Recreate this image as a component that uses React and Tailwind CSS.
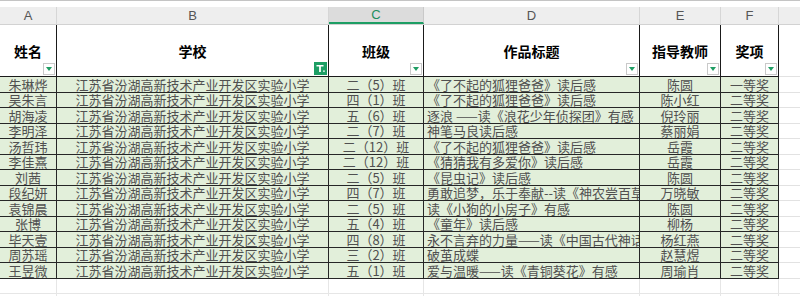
import React from "react";

const rows = [
  ["朱琳烨", "二（5）班", "《了不起的狐狸爸爸》读后感", "陈圆", "一等奖"],
  ["吴朱言", "四（1）班", "《了不起的狐狸爸爸》读后感", "陈小红", "二等奖"],
  ["胡海凌", "五（6）班", "逐浪 ——读《浪花少年侦探团》有感", "倪玲丽", "二等奖"],
  ["李明泽", "二（7）班", "神笔马良读后感", "蔡丽娟", "二等奖"],
  ["汤哲玮", "二（12）班", "《了不起的狐狸爸爸》读后感", "岳霞", "二等奖"],
  ["李佳熹", "二（12）班", "《猜猜我有多爱你》读后感", "岳霞", "二等奖"],
  ["刘茜", "二（5）班", "《昆虫记》读后感", "陈圆", "二等奖"],
  ["段纪妍", "四（7）班", "勇敢追梦，乐于奉献--读《神农尝百草》有感", "万晓敏", "二等奖"],
  ["袁锦晨", "二（5）班", "读《小狗的小房子》有感", "陈圆", "二等奖"],
  ["张博", "五（4）班", "《童年》读后感", "柳杨", "二等奖"],
  ["毕天壹", "四（8）班", "永不言弃的力量——读《中国古代神话》有感", "杨红燕", "二等奖"],
  ["周苏瑶", "三（2）班", "破茧成蝶", "赵慧煜", "二等奖"],
  ["王昱微", "五（1）班", "爱与温暖——读《青铜葵花》有感", "周瑜肖", "二等奖"],
];

const school = "江苏省汾湖高新技术产业开发区实验小学";

function FilterBtn() {
  return (
    <div className="absolute right-[1px] bottom-[1px] w-[12px] h-[12px] bg-white border border-[#c9c9c9] flex items-center justify-center">
      <svg width="6" height="4" viewBox="0 0 6 4">
        <path d="M0 0 L6 0 L3 4 Z" fill="#1f9d63" />
      </svg>
    </div>
  );
}

function FilterActive() {
  return (
    <div className="absolute right-[1px] bottom-[1px] w-[13px] h-[13px] bg-[#1d9e64] flex items-center justify-center">
      <svg width="11" height="11" viewBox="0 0 11 11">
        <path d="M1.5 2 H8.5 V3.6 H5.9 V9 H4.1 V3.6 H1.5 Z" fill="#ffffff" />
        <rect x="8.2" y="7.4" width="1.5" height="1.5" fill="#ffffff" />
      </svg>
    </div>
  );
}

const letterCell = "h-full flex items-center justify-center border-r border-[#d6d6d6] text-[13px] text-[#555]";
const dataCell = "h-full flex items-center bg-[#e2efda] border-r border-b border-[#262626] whitespace-nowrap overflow-hidden";
const blankCell = "h-full border-r border-b border-[#e6e6e6]";

export default function App() {
  return (
    <div
      className="w-[800px] h-[296px] overflow-hidden bg-white"
      style={{ fontFamily: '"Noto Sans CJK SC", "Noto Sans", sans-serif' }}
    >
      {/* top strip */}
      <div className="h-[7px] border-t border-[#c4c4c4] bg-white" />

      {/* column letters */}
      <div
        className="flex h-[18px] bg-[#eeeeee] border-b border-[#d2d2d2] leading-[14px]"
        style={{ fontFamily: '"Liberation Sans", Arial, sans-serif' }}
      >
        <div className={"w-[57px] " + letterCell}>A</div>
        <div className={"w-[272px] " + letterCell}>B</div>
        <div className="w-[95px] h-full flex items-center justify-center border-r border-[#c9c9c9] bg-[#dcdcdc] text-[13px] text-[#1d8f5e] border-b-2 border-b-[#1d9e64]">C</div>
        <div className={"w-[216px] " + letterCell}>D</div>
        <div className={"w-[81px] " + letterCell}>E</div>
        <div className={"w-[58px] " + letterCell}>F</div>
        <div className="flex-1 h-full" />
      </div>

      {/* header row */}
      <div className="flex h-[52px] text-[14px] leading-[16px] font-bold text-black">
        <div className="relative w-[57px] h-full flex items-center justify-center border-r border-b border-[#1a1a1a]">
          <span>姓名</span>
          <FilterBtn />
        </div>
        <div className="relative w-[272px] h-full flex items-center justify-center border-r border-b border-[#1a1a1a]">
          <span>学校</span>
          <FilterActive />
        </div>
        <div className="relative w-[95px] h-full flex items-center justify-center border-r border-b border-[#1a1a1a]">
          <span>班级</span>
          <FilterBtn />
        </div>
        <div className="relative w-[216px] h-full flex items-center justify-center border-r border-b border-[#1a1a1a]">
          <span>作品标题</span>
          <FilterBtn />
        </div>
        <div className="relative w-[81px] h-full flex items-center justify-center border-r border-b border-[#1a1a1a]">
          <span>指导教师</span>
          <FilterBtn />
        </div>
        <div className="relative w-[58px] h-full flex items-center justify-center border-r border-b border-[#1a1a1a]">
          <span>奖项</span>
          <FilterBtn />
        </div>
        <div className="flex-1 h-full border-b border-[#e2e2e2]" />
      </div>

      {/* data rows */}
      {rows.map((r, i) => (
        <div key={i} className="flex h-[15.5px] text-[13px] leading-[13px] text-[#505050]">
          <div className={"w-[57px] justify-center " + dataCell}>{r[0]}</div>
          <div className={"w-[272px] justify-center " + dataCell}>{school}</div>
          <div className={"w-[95px] justify-center " + dataCell}>{r[1]}</div>
          <div className={"w-[216px] justify-start pl-[3px] " + dataCell}>{r[2]}</div>
          <div className={"w-[81px] justify-center " + dataCell}>{r[3]}</div>
          <div className={"w-[58px] justify-center " + dataCell}>{r[4]}</div>
          <div className="flex-1 h-full border-b border-[#e2e2e2]" />
        </div>
      ))}

      {/* blank rows */}
      {[0, 1].map((k) => (
        <div key={k} className="flex h-[15.5px]">
          <div className={"w-[57px] " + blankCell} />
          <div className={"w-[272px] " + blankCell} />
          <div className={"w-[95px] " + blankCell} />
          <div className={"w-[216px] " + blankCell} />
          <div className={"w-[81px] " + blankCell} />
          <div className={"w-[58px] " + blankCell} />
          <div className="flex-1 h-full border-b border-[#e6e6e6]" />
        </div>
      ))}
    </div>
  );
}
